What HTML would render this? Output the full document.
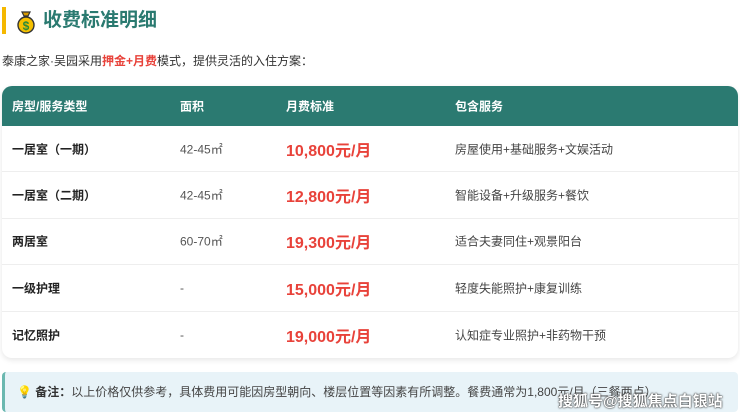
<!DOCTYPE html>
<html><head><meta charset="utf-8"><style>
*{margin:0;padding:0;box-sizing:border-box}
body{width:740px;height:416px;background:#fff;font-family:"Liberation Sans","Noto Sans CJK SC",sans-serif;position:relative;overflow:hidden;color:#333}
.bar{position:absolute;left:2px;top:7px;width:4px;height:27px;background:#f5b800}
.title{position:absolute;left:43px;top:7px;font-size:19px;font-weight:bold;color:#2a7a70;line-height:28px}
.icon{position:absolute;left:16px;top:10px}
.intro{position:absolute;left:2px;top:52px;font-size:12px;line-height:18px;color:#333}
.intro b{color:#e8423a}
.tbl{position:absolute;left:2px;top:86px;width:736px;height:272px;border-radius:10px;overflow:hidden;box-shadow:0 2px 6px rgba(0,0,0,.1);background:#fff}
.hd{height:40px;background:#2b7a71;color:#fff;font-weight:bold;font-size:12px;position:relative}
.row{height:46.4px;border-bottom:1px solid #eee;position:relative;font-size:12px}
.row:last-child{border-bottom:none}
.c{position:absolute;top:50%;transform:translateY(-50%);white-space:nowrap}
.c1{left:10px}.c2{left:178px}.c3{left:284px}.c4{left:453px}
.row .c1{font-weight:bold;color:#222}
.row .c2{color:#555}
.row .c3{color:#e8423a;font-weight:bold;font-size:16px}
.row .c4{color:#444}
.note{position:absolute;left:2px;top:372px;width:736px;height:40px;background:#e8f3f8;border-left:3px solid #6bb8b0;border-radius:4px;font-size:12px;line-height:40px;padding-left:12px;color:#444}
.note b{color:#333}
.wm{position:absolute;left:558px;top:390px;font-size:15px;color:#fff;font-weight:bold;text-shadow:0 0 2px #333,0 0 1px #000}
</style></head><body>
<div class="bar"></div>
<svg class="icon" width="20" height="24" viewBox="0 0 20 24"><path d="M6 2h8l-2 4h-4z" fill="#d79a00" stroke="#333" stroke-width="1.2"/><ellipse cx="10" cy="15" rx="8" ry="8" fill="#f5c000" stroke="#333" stroke-width="1.4"/><text x="10" y="20" font-size="12" font-weight="bold" text-anchor="middle" fill="#2a8a3a" font-family="Liberation Sans">$</text></svg>
<div class="title">收费标准明细</div>
<div class="intro">泰康之家·吴园采用<b>押金+月费</b>模式，提供灵活的入住方案：</div>
<div class="tbl">
<div class="hd"><span class="c c1">房型/服务类型</span><span class="c c2">面积</span><span class="c c3">月费标准</span><span class="c c4">包含服务</span></div>
<div class="row"><span class="c c1">一居室（一期）</span><span class="c c2">42-45㎡</span><span class="c c3">10,800元/月</span><span class="c c4">房屋使用+基础服务+文娱活动</span></div>
<div class="row"><span class="c c1">一居室（二期）</span><span class="c c2">42-45㎡</span><span class="c c3">12,800元/月</span><span class="c c4">智能设备+升级服务+餐饮</span></div>
<div class="row"><span class="c c1">两居室</span><span class="c c2">60-70㎡</span><span class="c c3">19,300元/月</span><span class="c c4">适合夫妻同住+观景阳台</span></div>
<div class="row"><span class="c c1">一级护理</span><span class="c c2">-</span><span class="c c3">15,000元/月</span><span class="c c4">轻度失能照护+康复训练</span></div>
<div class="row"><span class="c c1">记忆照护</span><span class="c c2">-</span><span class="c c3">19,000元/月</span><span class="c c4">认知症专业照护+非药物干预</span></div>
</div>
<div class="note">💡 <b>备注：</b>以上价格仅供参考，具体费用可能因房型朝向、楼层位置等因素有所调整。餐费通常为1,800元/月（三餐两点）</div>
<div class="wm">搜狐号@搜狐焦点白银站</div>
</body></html>
